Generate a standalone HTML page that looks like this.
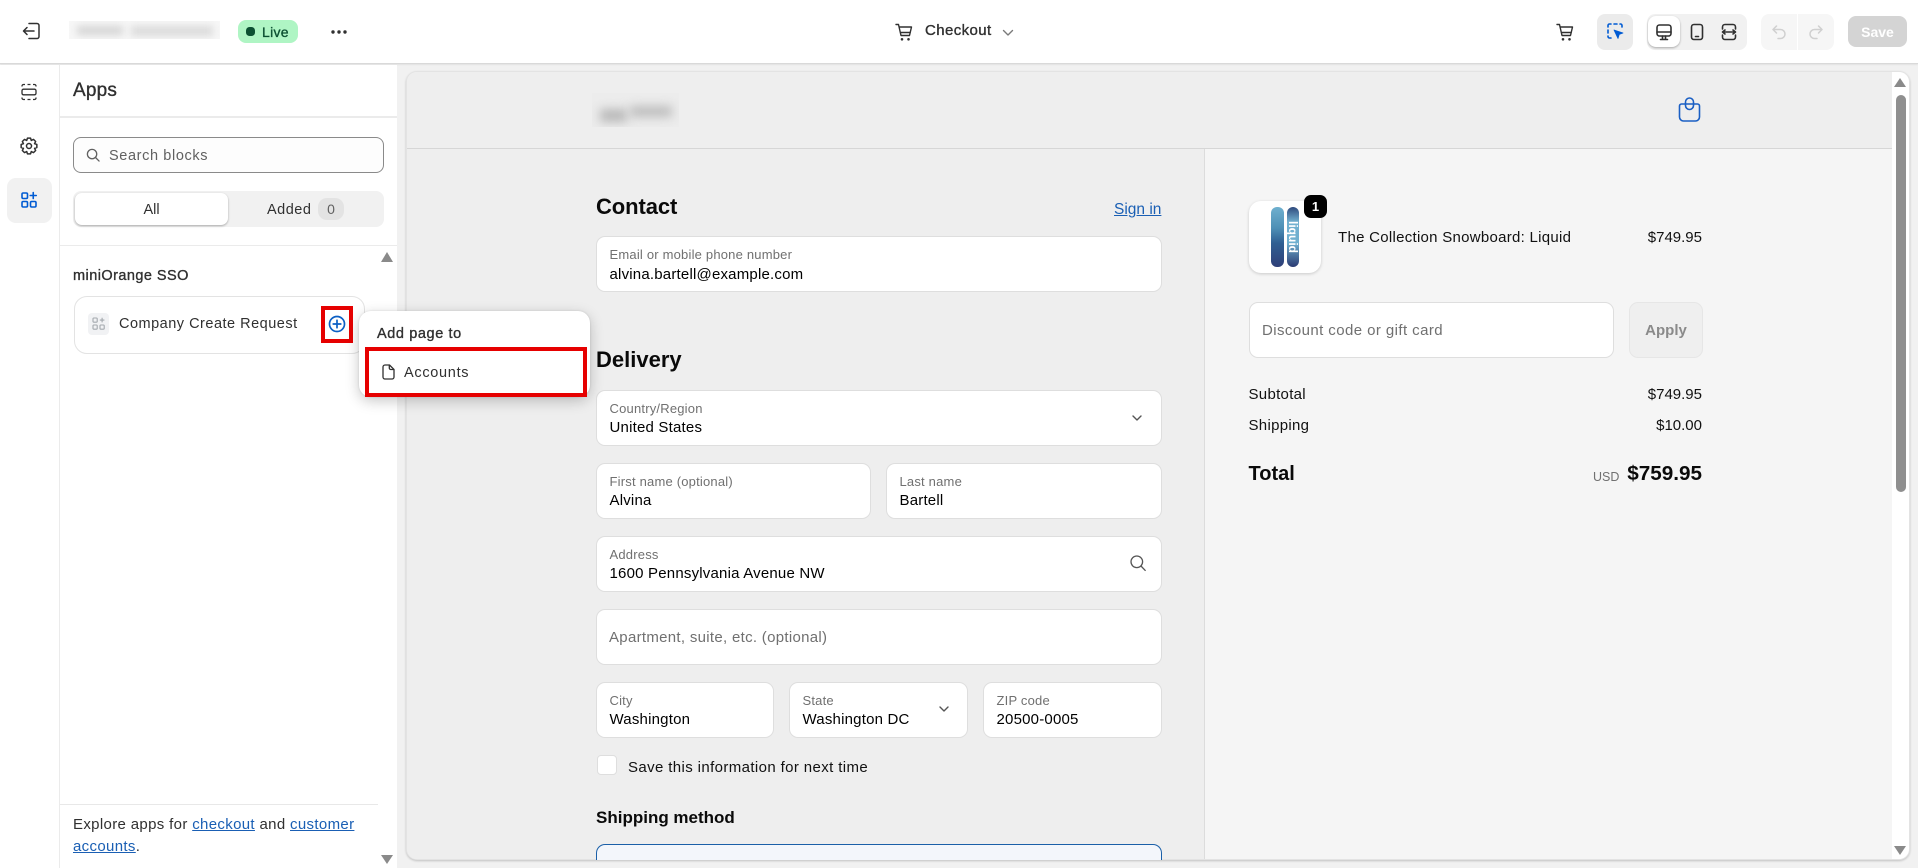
<!DOCTYPE html>
<html lang="en"><head><meta charset="utf-8"><title>Checkout editor</title>
<style>
*{box-sizing:border-box}
html,body{margin:0;padding:0;width:1918px;height:868px;overflow:hidden;background:#f1f1f1;font-family:"Liberation Sans",sans-serif}
.a{position:absolute}
.t{position:absolute;white-space:nowrap;line-height:20px;height:20px}
svg{position:absolute;overflow:visible;fill:none}
.f{position:absolute;background:#fff;border:1px solid #dedede;border-radius:9px;height:56px}
.l{position:absolute;left:13px;top:10px;font-size:13px;line-height:16px;color:#707070;white-space:nowrap;letter-spacing:.2px}
.v{position:absolute;left:13px;top:28px;font-size:15px;line-height:18px;color:#000;white-space:nowrap;letter-spacing:.2px}
.med{-webkit-text-stroke:.35px currentColor}
a{color:#1a5fb4;text-decoration:underline}
</style></head><body>

<!-- Top bar -->
<div class="a" style="left:0;top:0;width:1918px;height:64px;background:#fff;border-bottom:1px solid #d9d9d9;box-shadow:0 1px 1px rgba(0,0,0,.06)"></div>
<svg style="left:21px;top:21px" width="20" height="20" viewBox="0 0 20 20" stroke="#303030" stroke-width="1.5" stroke-linecap="round" stroke-linejoin="round"><path d="M8 2.500h8a2 2 0 0 1 2 2v11a2 2 0 0 1-2 2H8"/><path d="M13 10H2.500M6 6.500 2.500 10 6 13.500"/></svg>
<div class="a" style="left:69px;top:21px;width:151px;height:18px;background:#f7f7f7;overflow:hidden"><div class="a" style="left:8px;top:5px;width:46px;height:9px;background:#d4d4d4;filter:blur(4px)"></div><div class="a" style="left:62px;top:5px;width:82px;height:10px;background:#dadada;filter:blur(4px)"></div></div>
<div class="a" style="left:238px;top:20px;width:60px;height:23px;background:#aff5c4;border-radius:8px"></div>
<div class="a" style="left:246px;top:27px;width:9px;height:9px;background:#0c5132;border-radius:3.500px"></div>
<div class="t med" style="left:262px;top:22px;font-size:14px;color:#0c5132;letter-spacing:.3px">Live</div>
<svg style="left:331px;top:29px" width="16" height="6" viewBox="0 0 16 6"><circle cx="2" cy="3" r="1.700" fill="#303030"/><circle cx="8" cy="3" r="1.700" fill="#303030"/><circle cx="14" cy="3" r="1.700" fill="#303030"/></svg>

<svg style="left:895px;top:23px" width="18" height="18" viewBox="0 0 18 18" stroke="#303030" stroke-width="1.400" stroke-linecap="round" stroke-linejoin="round"><path d="M1 1.500h2.500L6 12.500h8.500L16.500 4H4.200"/><path d="M6.200 9.500h8.900"/><circle cx="7" cy="16.300" r=".6" fill="#303030"/><circle cx="13.500" cy="16.300" r=".6" fill="#303030"/></svg>
<div class="t med" style="left:925px;top:21px;font-size:15px;color:#303030;letter-spacing:.4px">Checkout</div>
<svg style="left:1002px;top:29px" width="12" height="8" viewBox="0 0 12 8" stroke="#7a7a7a" stroke-width="1.400" stroke-linecap="round" stroke-linejoin="round"><path d="M1.500 1.500 6 6l4.500-4.500"/></svg>

<svg style="left:1556px;top:23px" width="18" height="18" viewBox="0 0 18 18" stroke="#303030" stroke-width="1.400" stroke-linecap="round" stroke-linejoin="round"><path d="M1 1.500h2.500L6 12.500h8.500L16.500 4H4.200"/><path d="M6.200 9.500h8.900"/><circle cx="7" cy="16.300" r=".6" fill="#303030"/><circle cx="13.500" cy="16.300" r=".6" fill="#303030"/></svg>
<div class="a" style="left:1597px;top:14px;width:36px;height:36px;background:#ebebeb;border-radius:8px"></div>
<svg style="left:1606px;top:22px" width="18" height="18" viewBox="0 0 18 18" stroke="#005bd3" stroke-width="1.600" stroke-linecap="round"><path d="M2 5V3.500A1.500 1.500 0 0 1 3.500 2H5M8 2h3M14 2h.5A1.500 1.500 0 0 1 16 3.500V5M2 8v3M2 14v.5A1.500 1.500 0 0 0 3.500 16H5"/><path d="M8 8l9 3-3.800 1.400L12 16.500z" fill="#005bd3" stroke-width=".8" stroke-linejoin="round"/></svg>
<div class="a" style="left:1647px;top:14px;width:100px;height:36px;background:#f1f1f1;border-radius:8px"></div>
<div class="a" style="left:1648px;top:16px;width:32px;height:31px;background:#fff;border-radius:8px;box-shadow:0 1px 2px rgba(0,0,0,.3)"></div>
<svg style="left:1654px;top:22px" width="20" height="20" viewBox="0 0 20 20" stroke="#303030" stroke-width="1.600" stroke-linecap="round" stroke-linejoin="round"><rect x="3" y="3" width="14" height="11" rx="2.500"/><path d="M3 10h14M8.500 14v3M11.500 14v3M6.500 17.500h7"/></svg>
<svg style="left:1687px;top:22px" width="20" height="20" viewBox="0 0 20 20" stroke="#303030" stroke-width="1.600" stroke-linecap="round"><rect x="4.500" y="2.500" width="11" height="15" rx="2.500"/><path d="M8.500 14.500h3"/></svg>
<svg style="left:1719px;top:22px" width="20" height="20" viewBox="0 0 20 20" stroke="#303030" stroke-width="1.600" stroke-linecap="round" stroke-linejoin="round"><path d="M3.500 7V5a2.500 2.500 0 0 1 2.500-2.500h8A2.500 2.500 0 0 1 16.500 5v2M3.500 13v2A2.500 2.500 0 0 0 6 17.500h8a2.500 2.500 0 0 0 2.500-2.500v-2M3.500 10h13M6 8l-2.500 2L6 12M14 8l2.500 2-2.500 2"/></svg>
<div class="a" style="left:1761px;top:14px;width:73px;height:36px;background:#f6f6f6;border-radius:8px"></div>
<div class="a" style="left:1797px;top:14px;width:1px;height:36px;background:#fff"></div>
<svg style="left:1769px;top:22px" width="20" height="20" viewBox="0 0 20 20" stroke="#d0d0d0" stroke-width="1.500" stroke-linecap="round" stroke-linejoin="round"><path d="M7.500 4 4 7.500 7.500 11M4 7.500h7.500a4.500 4.500 0 0 1 0 9H9"/></svg>
<svg style="left:1806px;top:22px" width="20" height="20" viewBox="0 0 20 20" stroke="#d0d0d0" stroke-width="1.500" stroke-linecap="round" stroke-linejoin="round"><path d="M12.500 4 16 7.500 12.500 11M16 7.500H8.500a4.500 4.500 0 0 0 0 9H11"/></svg>
<div class="a" style="left:1848px;top:16px;width:59px;height:31px;background:#d4d4d4;border-radius:8px"></div>
<div class="t" style="left:1848px;width:59px;text-align:center;top:22px;font-size:14px;font-weight:700;color:#fff">Save</div>

<!-- Left rail -->
<div class="a" style="left:0;top:65px;width:60px;height:803px;background:#fff;border-right:1px solid #ebebeb"></div>
<svg style="left:20px;top:83px" width="18" height="18" viewBox="0 0 18 18" stroke="#303030" stroke-width="1.300"><rect x="2" y="6.200" width="14" height="5.600" rx="1.500"/><path d="M2 3.500V3a1.500 1.500 0 0 1 1.500-1.500H5M7.500 1.500h3M13 1.500h1.500A1.500 1.500 0 0 1 16 3v.5M2 14.500v.5a1.500 1.500 0 0 0 1.500 1.500H5M7.500 16.500h3M13 16.500h1.500A1.500 1.500 0 0 0 16 15v-.5"/></svg>
<svg style="left:19px;top:136px" width="20" height="20" viewBox="0 0 20 20" stroke="#303030" stroke-width="1.500" stroke-linejoin="round"><path d="M11.530 2.150 12.300 4.460 14.470 3.370 16.630 5.530 15.540 7.700 17.850 8.470V11.530L15.540 12.300 16.630 14.470 14.470 16.630 12.300 15.540 11.530 17.850H8.470L7.700 15.540 5.530 16.630 3.370 14.470 4.460 12.300 2.150 11.530V8.470L4.460 7.700 3.370 5.530 5.530 3.370 7.700 4.460 8.470 2.150z"/><circle cx="10" cy="10" r="2.500"/></svg>
<div class="a" style="left:7px;top:178px;width:45px;height:45px;background:#f1f1f1;border-radius:9px"></div>
<svg style="left:20px;top:191px" width="18" height="18" viewBox="0 0 18 18" stroke="#005bd3" stroke-width="1.600" stroke-linecap="round"><rect x="2" y="2" width="5.500" height="5.500" rx="1.200"/><rect x="2" y="10.500" width="5.500" height="5.500" rx="1.200"/><rect x="10.500" y="10.500" width="5.500" height="5.500" rx="1.200"/><path d="M13.250 1.500v6M10.250 4.500h6"/></svg>

<!-- Side panel -->
<div class="a" style="left:60px;top:65px;width:337px;height:803px;background:#fff"></div>
<div class="t med" style="left:73px;top:81px;font-size:19px;color:#303030;letter-spacing:.2px">Apps</div>
<div class="a" style="left:60px;top:116px;width:337px;height:2px;background:#ebebeb"></div>
<div class="a" style="left:73px;top:137px;width:311px;height:36px;background:#fdfdfd;border:1px solid #8a8a8a;border-radius:8px"></div>
<svg style="left:86px;top:148px" width="14" height="14" viewBox="0 0 15 15" stroke="#616161" stroke-width="1.400" stroke-linecap="round"><circle cx="6.500" cy="6.500" r="5"/><path d="M10.200 10.200 14 14"/></svg>
<div class="t" style="left:109px;top:146px;font-size:14.500px;color:#616161;letter-spacing:.62px">Search blocks</div>
<div class="a" style="left:73px;top:191px;width:311px;height:36px;background:#f1f1f1;border-radius:8px"></div>
<div class="a" style="left:75px;top:193px;width:153px;height:32px;background:#fff;border-radius:7px;box-shadow:0 1px 2px rgba(0,0,0,.3)"></div>
<div class="t" style="left:75px;width:153px;text-align:center;top:200px;font-size:14.500px;color:#303030">All</div>
<div class="t" style="left:267px;top:200px;font-size:14.500px;color:#303030;letter-spacing:.5px">Added</div>
<div class="a" style="left:318px;top:198px;width:26px;height:22px;background:#e3e3e3;border-radius:9px;text-align:center;line-height:22px;font-size:14px;color:#616161">0</div>
<div class="a" style="left:60px;top:245px;width:337px;height:1px;background:#ebebeb"></div>
<div class="a" style="left:381px;top:252px;width:0;height:0;border-left:6.500px solid transparent;border-right:6.500px solid transparent;border-bottom:10px solid #8a8a8a"></div>
<div class="t med" style="left:73px;top:266px;font-size:14.500px;color:#303030;letter-spacing:.45px">miniOrange SSO</div>
<div class="a" style="left:73.500px;top:296px;width:291px;height:58px;background:#fff;border:1px solid #e3e3e3;border-radius:13px"></div>
<div class="a" style="left:88px;top:313px;width:21px;height:22px;background:#f1f2f4;border-radius:4px"></div>
<svg style="left:92px;top:317px" width="14" height="14" viewBox="0 0 14 14" stroke="#a3a8ad" stroke-width="1.100"><rect x="1" y="1" width="4.200" height="4.200" rx=".8"/><rect x="1" y="8" width="4.200" height="4.200" rx=".8"/><rect x="8" y="8" width="4.200" height="4.200" rx=".8"/><path d="M10.100 .8v4.600M7.800 3.100h4.600"/></svg>
<div class="t" style="left:119px;top:314px;font-size:14.500px;color:#303030;letter-spacing:.5px">Company Create Request</div>
<div class="a" style="left:321px;top:306px;width:32px;height:37px;border:4px solid #e60000"></div>
<svg style="left:328px;top:315px" width="18" height="18" viewBox="0 0 18 18" stroke="#0b5fc4" stroke-width="1.700" stroke-linecap="round"><circle cx="9" cy="9" r="7.500"/><path d="M9 5.200v7.600M5.200 9h7.600"/></svg>

<!-- Preview -->
<div class="a" style="left:405.500px;top:71px;width:1504.500px;height:789px;border-radius:11px;overflow:hidden;background:#f5f5f5;border:1px solid #e3e3e3;box-shadow:0 1px 2px rgba(0,0,0,.2)">
  <div class="a" style="left:0;top:0;width:798px;height:789px;background:#eeeeee"></div>
  <div class="a" style="left:0;top:0;width:1485px;height:77px;background:#eeeeee;border-bottom:1px solid #d6d6d6"></div>
  <div class="a" style="left:797px;top:77px;width:1px;height:712px;background:#dcdcdc"></div>
  <div class="a" style="left:1485px;top:0;width:19px;height:789px;background:#fff"></div>
</div>
<div class="a" style="left:592px;top:93px;width:87px;height:34px;background:#ececec;overflow:hidden"><div class="a" style="left:8px;top:16px;width:27px;height:13px;background:#b8b8b8;filter:blur(5px)"></div><div class="a" style="left:38px;top:13px;width:42px;height:11px;background:#bcbcbc;filter:blur(5px)"></div></div>
<svg style="left:1678px;top:97px" width="23" height="25" viewBox="0 0 23 25" stroke="#1a5fc4" stroke-width="1.600" stroke-linejoin="round"><path d="M3.500 7h16a2 2 0 0 1 2 2v11a4 4 0 0 1-4 4h-12a4 4 0 0 1-4-4V9a2 2 0 0 1 2-2z"/><rect x="7.500" y="1" width="8" height="11.500" rx="4"/></svg>

<!-- Scrollbar -->
<div class="a" style="left:1894px;top:78px;width:0;height:0;border-left:6.500px solid transparent;border-right:6.500px solid transparent;border-bottom:9px solid #8a8a8a"></div>
<div class="a" style="left:1895.500px;top:95px;width:10.500px;height:397px;background:#8f8f8f;border-radius:5px"></div>
<div class="a" style="left:1894px;top:846px;width:0;height:0;border-left:6.500px solid transparent;border-right:6.500px solid transparent;border-top:9px solid #8a8a8a"></div>

<!-- Form -->
<div class="t" style="left:596px;top:197px;font-size:22px;color:#0a0a0a;font-weight:700;letter-spacing:-.1px">Contact</div>
<div class="t" style="left:1114px;top:200px;font-size:15.500px"><a>Sign in</a></div>
<div class="f" style="left:595.500px;top:236px;width:566px"><div class="l">Email or mobile phone number</div><div class="v" style="top:29px">alvina.bartell@example.com</div></div>
<div class="t" style="left:596px;top:350px;font-size:22px;color:#0a0a0a;font-weight:700">Delivery</div>
<div class="f" style="left:595.500px;top:389.500px;width:566px"><div class="l">Country/Region</div><div class="v">United States</div></div>
<svg style="left:1131px;top:414px" width="12" height="8" viewBox="0 0 12 8" stroke="#555" stroke-width="1.400" stroke-linecap="round" stroke-linejoin="round"><path d="M2 2l4 4 4-4"/></svg>
<div class="f" style="left:595.500px;top:462.500px;width:275.500px"><div class="l">First name (optional)</div><div class="v">Alvina</div></div>
<div class="f" style="left:885.500px;top:462.500px;width:276px"><div class="l">Last name</div><div class="v">Bartell</div></div>
<div class="f" style="left:595.500px;top:535.500px;width:566px"><div class="l">Address</div><div class="v">1600 Pennsylvania Avenue NW</div></div>
<svg style="left:1130px;top:555px" width="16" height="16" viewBox="0 0 16 16" stroke="#555" stroke-width="1.300" stroke-linecap="round"><circle cx="6.800" cy="6.800" r="5.800"/><path d="M11 11l4.200 4.400"/></svg>
<div class="f" style="left:595.500px;top:608.500px;width:566px"></div>
<div class="t" style="left:609px;top:628px;font-size:15px;color:#707070;letter-spacing:.3px">Apartment, suite, etc. (optional)</div>
<div class="f" style="left:595.500px;top:681.500px;width:178px"><div class="l">City</div><div class="v">Washington</div></div>
<div class="f" style="left:788.500px;top:681.500px;width:179px"><div class="l">State</div><div class="v">Washington DC</div></div>
<svg style="left:938px;top:705px" width="12" height="8" viewBox="0 0 12 8" stroke="#555" stroke-width="1.400" stroke-linecap="round" stroke-linejoin="round"><path d="M2 2l4 4 4-4"/></svg>
<div class="f" style="left:982.500px;top:681.500px;width:179px"><div class="l">ZIP code</div><div class="v">20500-0005</div></div>
<div class="a" style="left:597px;top:755px;width:20px;height:20px;background:#fff;border:1px solid #dedede;border-radius:4px"></div>
<div class="t" style="left:628px;top:757.500px;font-size:15px;color:#111;letter-spacing:.38px">Save this information for next time</div>
<div class="t" style="left:596px;top:808px;font-size:17px;color:#0a0a0a;font-weight:700">Shipping method</div>
<div class="a" style="left:595.500px;top:844px;width:566px;height:16px;background:#f3f6fb;border:1.500px solid #1a5fa8;border-bottom:none;border-radius:9px 9px 0 0"></div>

<!-- Order summary -->
<div class="a" style="left:1248.500px;top:201px;width:72px;height:72px;background:#fff;border-radius:12px;box-shadow:0 1px 3px rgba(0,0,0,.18)"></div>
<div class="a" style="left:1271px;top:207px;width:12.500px;height:60px;border-radius:6px;background:linear-gradient(180deg,#6fb0cf 0%,#4e90b6 35%,#2f5f93 60%,#2f3f78 100%)"></div>
<div class="a" style="left:1286.500px;top:207px;width:12px;height:60px;border-radius:6px;background:linear-gradient(180deg,#2e4a7d 0%,#72b1d0 25%,#6fb0cf 60%,#2a3a72 100%);overflow:hidden"><div class="a" style="left:-14px;top:24px;width:40px;height:12px;line-height:12px;font-size:12px;font-weight:700;color:#fff;text-align:center;transform:rotate(90deg)">liquid</div></div>
<div class="a" style="left:1304px;top:195px;width:23px;height:23px;background:#000;border-radius:7px;color:#fff;font-weight:700;font-size:13px;line-height:23px;text-align:center">1</div>
<div class="t" style="left:1338px;top:227.500px;font-size:15px;color:#111;letter-spacing:.28px">The Collection Snowboard: Liquid</div>
<div class="t" style="right:216px;top:227.500px;font-size:15px;color:#111">$749.95</div>
<div class="a" style="left:1248.500px;top:301.500px;width:365.500px;height:56px;background:#fff;border:1px solid #dedede;border-radius:9px"></div>
<div class="t" style="left:1262px;top:321px;font-size:15px;color:#707070;letter-spacing:.42px">Discount code or gift card</div>
<div class="a" style="left:1629px;top:301.500px;width:74px;height:56px;background:#efefef;border:1px solid #e6e6e6;border-radius:9px;text-align:center;line-height:56px;font-size:15px;font-weight:700;color:#8a8a8a">Apply</div>
<div class="t" style="left:1248.500px;top:385px;font-size:15px;color:#111;letter-spacing:.3px">Subtotal</div>
<div class="t" style="right:216px;top:385px;font-size:15px;color:#111">$749.95</div>
<div class="t" style="left:1248.500px;top:416px;font-size:15px;color:#111;letter-spacing:.3px">Shipping</div>
<div class="t" style="right:216px;top:416px;font-size:15px;color:#111">$10.00</div>
<div class="t" style="left:1248.500px;top:464px;font-size:20px;font-weight:700;color:#0a0a0a">Total</div>
<div class="t" style="left:1593px;top:467px;font-size:12.500px;color:#707070">USD</div>
<div class="t" style="right:216px;top:464px;font-size:20.700px;font-weight:700;color:#0a0a0a">$759.95</div>

<!-- Popup -->
<div class="a" style="left:359px;top:311px;width:231px;height:86px;background:#fff;border-radius:12px;box-shadow:0 4px 14px rgba(0,0,0,.22),0 0 2px rgba(0,0,0,.12)"></div>
<div class="t med" style="left:377px;top:324px;font-size:14.500px;color:#303030;letter-spacing:.6px">Add page to</div>
<div class="a" style="left:365px;top:347px;width:222px;height:50px;border:4px solid #e60000"></div>
<svg style="left:380px;top:364px" width="16" height="16" viewBox="0 0 16 16" stroke="#303030" stroke-width="1.300" stroke-linejoin="round"><path d="M3 3a2 2 0 0 1 2-2h4.500L14 5.500V13a2 2 0 0 1-2 2H5a2 2 0 0 1-2-2z"/><path d="M9.300 1v3a1.500 1.500 0 0 0 1.500 1.500H14"/></svg>
<div class="t" style="left:404px;top:363px;font-size:14.500px;color:#303030;letter-spacing:.7px">Accounts</div>

<!-- Panel footer -->
<div class="a" style="left:60px;top:804px;width:318px;height:1px;background:#e8e8e8"></div>
<div class="t" style="left:73px;top:815px;font-size:15px;color:#303030;letter-spacing:.34px">Explore apps for <a>checkout</a> and <a>customer</a></div>
<div class="t" style="left:73px;top:837px;font-size:15px;color:#303030;letter-spacing:.34px"><a>accounts</a>.</div>
<div class="a" style="left:381px;top:855px;width:0;height:0;border-left:6px solid transparent;border-right:6px solid transparent;border-top:9px solid #8a8a8a"></div>
</body></html>
